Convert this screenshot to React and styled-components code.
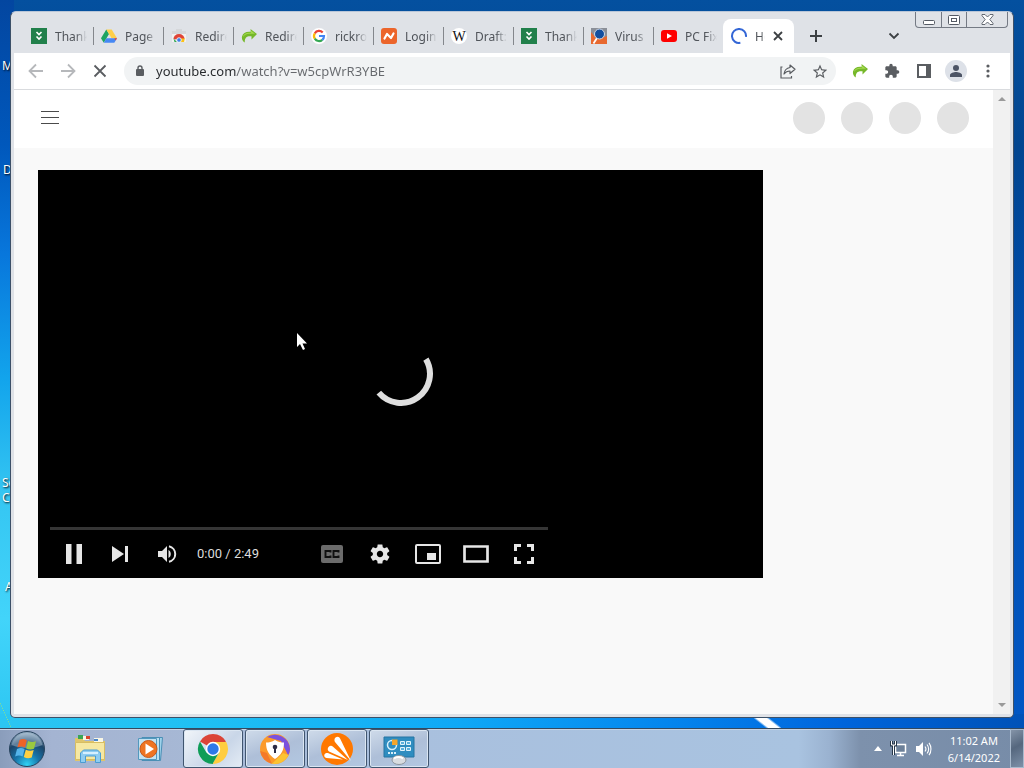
import {styled, createGlobalStyle} from 'styled-components'

const GlobalStyle = createGlobalStyle`
  * {
    box-sizing: border-box;
  }
  body {
    margin: 0;
    font-family: "Noto Sans", "Open Sans", sans-serif;
  }
  button {
    border: 0;
    padding: 0;
    margin: 0;
    background: none;
    font-family: inherit;
    color: inherit;
  }
  svg {
    display: block;
    flex: none;
  }
`

const Desktop = styled.div`
  display: flex;
  flex-direction: column;
  min-height: 100vh;
  overflow: hidden;
`

const Wallpaper = styled.div`
  position: relative;
  display: flex;
  flex: 1;
  padding: 11px 10px 10px;
  background:
    linear-gradient(66deg, transparent 48%, #8fe08a 50%, transparent 52%) left bottom / 11px 26px no-repeat,
    linear-gradient(38deg, transparent 30%, #ffffff 38%, #ffffff 62%, transparent 70%) 753px 100% / 28px 11px no-repeat,
    linear-gradient(90deg, #2cc6f2 0%, #1fc0f4 20%, #0fa8f6 45%, #0486ee 65%, #0065dc 82%, #0052b8 100%) left bottom / 100% 14px no-repeat,
    linear-gradient(180deg, #0346a0 0%, #0058bc 20%, #0877dc 35%, #12a4ec 52%, #35c6f2 68%, #42d4fa 85%, #2cc6f2 100%) left top / 14px 100% no-repeat,
    linear-gradient(180deg, #04509f 0%, #014590 20%, #004fb0 50%, #0056c4 100%);
`

const DesktopLabel = styled.span`
  position: absolute;
  left: ${props => props.$left}px;
  top: ${props => props.$top}px;
  font-size: 12px;
  line-height: 15px;
  color: #ffffff;
  white-space: pre;
  text-shadow: 1px 1px 2px #000000;
`

const Window = styled.main`
  position: relative;
  display: flex;
  flex-direction: column;
  flex: 1;
  min-width: 0;
  padding: 0 3px 3px;
  border: 1px solid #3c5068;
  border-top-color: #b9c6d8;
  border-radius: 6px 6px 5px 5px;
  background: #dfe2e7;
  overflow: hidden;
`

const TabStrip = styled.div`
  display: flex;
  height: 41px;
  padding-left: 9px;
`

const Tab = styled.button`
  display: flex;
  align-items: center;
  gap: 8px;
  width: 70px;
  height: 18px;
  margin-top: 15px;
  padding: 0 6px 0 7px;
  border-left: 1px solid ${props => (props.$first ? 'transparent' : '#84878c')};
  font-size: 12px;
  color: #50545a;
`

const TabTitle = styled.span`
  flex: 1;
  overflow: hidden;
  text-align: left;
  white-space: nowrap;
  mask-image: linear-gradient(90deg, #000000 65%, transparent 100%);
`

const ActiveTab = styled.div`
  display: flex;
  align-items: center;
  gap: 8px;
  width: 71px;
  height: 34px;
  margin-top: 7px;
  padding: 0 11px 0 8px;
  border-radius: 8px 8px 0 0;
  background: #ffffff;
  font-size: 12px;
  color: #50545a;
`

const StripButton = styled.button`
  display: flex;
  align-items: center;
  justify-content: center;
  width: 28px;
  height: 28px;
  margin-top: 10px;
  margin-left: ${props => props.$gap}px;
`

const CloseTab = styled.button`
  width: 10px;
  height: 10px;
`

const Caption = styled.div`
  display: flex;
  height: 16px;
  margin-left: auto;
  margin-right: 2px;
  border: 1px solid #747a84;
  border-top: 0;
  border-radius: 0 0 4px 4px;
`

const CaptionButton = styled.button`
  display: flex;
  align-items: center;
  justify-content: center;
  width: ${props => (props.$wide ? 41 : 25)}px;
  & + & {
    border-left: 1px solid #747a84;
  }
`

const Toolbar = styled.div`
  display: flex;
  align-items: center;
  height: 37px;
  padding: 0 6px;
  border-bottom: 1px solid #d9dbde;
  background: #ffffff;
`

const ToolButton = styled.button`
  display: flex;
  align-items: center;
  justify-content: center;
  flex: none;
  width: 32px;
  height: 28px;
  color: ${props => (props.$faded ? '#b6b8bb' : '#5a5d61')};
`

const Omnibox = styled.form`
  display: flex;
  align-items: center;
  flex: 1;
  min-width: 0;
  height: 28px;
  margin: 0 8px;
  border-radius: 14px;
  background: #f1f3f4;
`

const Address = styled.input`
  flex: 1;
  min-width: 0;
  height: 28px;
  padding: 0;
  border: 0;
  outline: 0;
  font-family: "Noto Sans", "Open Sans", sans-serif;
  font-size: 13px;
  color: transparent;
  background: linear-gradient(90deg, #26292c 80px, #66696d 80px);
  background-clip: text;
`

const Avatar = styled.span`
  display: flex;
  align-items: center;
  justify-content: center;
  width: 22px;
  height: 22px;
  border-radius: 50%;
  background: #dde1e8;
`

const Viewport = styled.div`
  display: flex;
  flex: 1;
  background: #f9f9f9;
`

const Page = styled.div`
  flex: 1;
  min-width: 0;
`

const Scrollbar = styled.div`
  display: flex;
  flex-direction: column;
  justify-content: space-between;
  align-items: center;
  width: 17px;
  padding: 7px 0;
  background: #f1f1f1;
`

const Masthead = styled.header`
  display: flex;
  align-items: center;
  justify-content: space-between;
  height: 58px;
  padding: 0 24px 2px 26px;
  background: #ffffff;
`

const Placeholders = styled.div`
  display: flex;
  gap: 16px;
`

const Circle = styled.span`
  width: 32px;
  height: 32px;
  border-radius: 50%;
  background: #e3e3e3;
`

const WatchLayout = styled.div`
  display: grid;
  grid-template-columns: minmax(0, 1fr) 182px;
  gap: 24px;
  padding: 22px 24px;
`

const Player = styled.section`
  position: relative;
  display: flex;
  flex-direction: column;
  justify-content: flex-end;
  aspect-ratio: 16 / 9;
  padding: 0 12px;
  background: #000000;
`

const Spinner = styled.div`
  position: absolute;
  inset: 0;
  display: flex;
  align-items: center;
  justify-content: center;
`

const Controls = styled.div`
  position: relative;
  width: 71%;
  border-top: 3px solid #353535;
`

const ControlRow = styled.div`
  display: flex;
  align-items: center;
  height: 48px;
  color: #e6e6e6;
`

const ControlButton = styled.button`
  display: flex;
  align-items: center;
  justify-content: center;
  width: ${props => (props.$right ? 48 : 47)}px;
  height: 48px;
`

const Time = styled.span`
  flex: 1;
  padding-left: 6px;
  font-family: Roboto, "Liberation Sans", sans-serif;
  font-size: 13px;
  color: #dddddd;
  white-space: nowrap;
`

const Pointer = styled.svg`
  position: absolute;
  left: 285px;
  top: 320px;
`

const Taskbar = styled.footer`
  display: flex;
  align-items: center;
  height: 40px;
  border-top: 1px solid #34495f;
  box-shadow: inset 0 1px 0 #c6d4e6;
  background: linear-gradient(90deg, #8a9dbb 0%, #a4b4d2 5%, #a6b7d4 16%, #a9c0de 40%, #a9c3e0 78%, #9ab2d0 81%, #7d91ac 84%, #778ca8 100%);
`

const StartButton = styled.button`
  display: flex;
  justify-content: center;
  width: 54px;
`

const Pinned = styled.button`
  display: flex;
  justify-content: center;
  width: 61px;
  margin-left: ${props => (props.$first ? 5 : 0)}px;
`

const Running = styled.div`
  display: flex;
  align-self: stretch;
  gap: 2px;
  padding-left: 2px;
`

const TaskButton = styled.button`
  display: flex;
  align-items: center;
  justify-content: center;
  width: 60px;
  border: 1px solid #40556f;
  border-radius: 3px;
  box-shadow: inset 0 0 0 1px #dbe6f2;
  background: ${props =>
    props.$active
      ? 'linear-gradient(135deg, #f2f6fa, #c9d6e8 60%, #e4ecf5)'
      : 'linear-gradient(160deg, #cfdbea, #aebfd8 50%, #b3c8e2)'};
`

const Tray = styled.div`
  display: flex;
  align-items: center;
  align-self: stretch;
  gap: 8px;
  margin-left: auto;
`

const Clock = styled.div`
  margin: 0 2px 0 8px;
  font-size: 11px;
  line-height: 17px;
  text-align: center;
  color: #ffffff;
`

const ShowDesktop = styled.button`
  align-self: stretch;
  width: 14px;
  border: 1px solid #a9bacd;
  background: linear-gradient(150deg, #8494a8, #55677e 45%, #7d90a8);
`

function DownloadMark() {
  return (
    <svg width="16" height="16" viewBox="0 0 16 16">
      <path fill="#21804b" d="M0 0h16v16H0z" />
      <path d="M5.500 4l2.500 2.500 2.500-2.500M5.500 8.500l2.500 2.500 2.500-2.500" fill="none" stroke="#fff" strokeWidth="1.600" />
    </svg>
  )
}

function DriveMark() {
  return (
    <svg width="16" height="16" viewBox="0 0 16 16">
      <path fill="#1da462" d="M5.300 1.500L8 6 2.800 14.700 0 10.300z" />
      <path fill="#ffcf48" d="M5.300 1.500h5.400L16 10.300h-5.400z" />
      <path fill="#4688f4" d="M5.400 10.300H16l-2.700 4.400H2.800z" />
      <path fill="#ea4335" d="M13.300 10.300H16l-1.400 2.300z" />
    </svg>
  )
}

function StoreMark() {
  return (
    <svg width="16" height="16" viewBox="0 0 16 16">
      <path fill="#f2f2f2" d="M1 3h14v11H1z" />
      <path fill="#d5d7da" d="M5 1h6v2H5zM1 3h14v3H1z" />
      <path fill="#e04437" d="M2.500 11a5.500 5 0 0 1 11 0l-5.500 1z" />
      <path fill="#35a853" d="M2.500 10.500L6 14H3.500z" />
      <path fill="#fbc116" d="M13.800 10.500H9L8 14h5z" />
      <circle cx="8" cy="12" r="2.300" fill="#3f7fe8" stroke="#fff" strokeWidth=".8" />
    </svg>
  )
}

function GreenArrow() {
  return (
    <svg width="16" height="16" viewBox="0 0 16 16">
      <path fill="#76b82a" d="M9.500 1L16 6l-5.500 5.500V8.300C6 7.600 3.500 9.500 3.800 14.500 1.800 13.500.5 11 1 8.600 1.800 5 5 3.300 9.800 3.800z" />
      <path fill="#a3d84e" d="M9.900 2.500L14 5.700H9C5.500 5.500 3 7 1.800 9.300 2.200 6 5 4.300 9.900 4.700z" />
    </svg>
  )
}

function GoogleMark() {
  return (
    <svg width="16" height="16" viewBox="0 0 16 16">
      <circle cx="8" cy="8" r="8" fill="#fff" />
      <g fill="none" strokeWidth="2.200">
        <path stroke="#ea4335" d="M3.800 5.300A5 5 0 0 1 11.700 4.500" />
        <path stroke="#fbbc05" d="M3.800 10.700A5 5 0 0 1 3.800 5.300" />
        <path stroke="#34a853" d="M11.300 11.800A5 5 0 0 1 3.800 10.700" />
        <path stroke="#4285f4" d="M8 8h5A5 5 0 0 1 11.300 11.800" />
      </g>
    </svg>
  )
}

function NamecheapMark() {
  return (
    <svg width="16" height="16" viewBox="0 0 16 16">
      <rect width="16" height="16" rx="3" fill="#ec652b" />
      <path d="M3.500 10.500l2.500-4.500 4 4 2.500-4.500" fill="none" stroke="#fff" strokeWidth="2.200" strokeLinecap="round" strokeLinejoin="round" />
    </svg>
  )
}

function WikiMark() {
  return (
    <svg width="16" height="16" viewBox="0 0 16 16">
      <circle cx="8" cy="8" r="8" fill="#fff" />
      <text x="8" y="13" textAnchor="middle" fontFamily="Liberation Serif" fontSize="14" fill="#111">W</text>
    </svg>
  )
}

function VirusMark() {
  return (
    <svg width="16" height="16" viewBox="0 0 16 16">
      <path fill="#8b8f98" d="M0 0h16v16H0z" />
      <path fill="#e8692f" d="M0 4l5 6h6l5-2v8H0z" />
      <path d="M6 10l-3.500 5.500" stroke="#fff" strokeWidth="1.800" />
      <circle cx="8.500" cy="6" r="5" fill="#134fa0" stroke="#d4dae4" />
    </svg>
  )
}

function YoutubeMark() {
  return (
    <svg width="16" height="16" viewBox="0 0 16 16">
      <rect y="2" width="16" height="12" rx="3" fill="#f00" />
      <path fill="#fff" d="M6 5.300v5.400L11 8z" />
    </svg>
  )
}

function ChromeMark() {
  return (
    <svg width="32" height="32" viewBox="0 0 32 32">
      <path fill="#db4437" d="M16 16L3 8.500a15 15 0 0 1 26 0z" />
      <path fill="#0f9d58" d="M16 16l0 15A15 15 0 0 1 3 8.500l6.500 11.200z" />
      <path fill="#ffcd40" d="M16 9h13.300A15 15 0 0 1 15.500 31L22 19.500z" />
      <path fill="#0f9d58" d="M9.800 19.500L15.500 31l6.500-11.500z" />
      <circle cx="16" cy="16" r="7.200" fill="#fff" />
      <circle cx="16" cy="16" r="5.700" fill="#2f79e8" />
    </svg>
  )
}

function SecureBrowserMark() {
  return (
    <svg width="32" height="32" viewBox="0 0 32 32">
      <circle cx="16" cy="16" r="15" fill="#fb9a2b" />
      <path fill="#7b51dd" d="M8 4a15 15 0 0 1 23 12c0 2-1 5-2 6L22 8z" />
      <path fill="#fbc332" d="M29.500 22A15 15 0 0 1 13 30.700L24 20z" />
      <path fill="#f47a2a" d="M13 30.700A15 15 0 0 1 1.200 18L8 20z" />
      <path fill="#fff" d="M16 7c3 2 6 2.500 9 2.500 0 8-3 12.500-9 16.500-6-4-9-8.500-9-16.500 3 0 6-.5 9-2.500z" />
      <circle cx="16" cy="14" r="2.300" fill="#2c2c46" />
      <path fill="#2c2c46" d="M15 14h2v6h-2z" />
    </svg>
  )
}

function AvastMark() {
  return (
    <svg width="34" height="32" viewBox="0 0 34 32">
      <circle cx="17" cy="16" r="16" fill="#ff7800" />
      <g fill="#fff">
        <path d="M15.500 4.500c2-1.500 4-.5 4.700 1.200L31 28 15 9c-.8-1.300-.8-3.500.5-4.500z" />
        <path d="M8.500 14c1.500-1.700 3.300-1.500 4.500-.3L28 27 9 18.500c-1.500-1-1.700-3-.5-4.500z" />
        <path d="M4.500 21.500c1-1.500 2.600-1.700 4-1.200L23 26.500 6.500 25C4.500 24.500 3.800 23 4.500 21.500z" />
      </g>
    </svg>
  )
}

function ControlPanelMark() {
  return (
    <svg width="32" height="32" viewBox="0 0 32 32">
      <path fill="#2f8dc0" stroke="#2775a2" d="M1 4h30v20H1z" />
      <circle cx="9" cy="12" r="4.500" fill="none" stroke="#d5effa" strokeWidth="1.500" />
      <path fill="#f5a52b" d="M9 12V6.500h5.500V12z" />
      <g fill="#5db1dc" stroke="#e1f4fc">
        <path d="M17.500 8.500h4v3h-4zM23.500 8.500h4v3h-4zM17.500 14.500h4v3h-4zM23.500 14.500h4v3h-4z" />
      </g>
      <path d="M5 20h2M8 20h2M11 20h2" stroke="#d5effa" strokeWidth="2" />
      <ellipse cx="16" cy="27" rx="7" ry="4.500" fill="#d8dce0" stroke="#8c959d" />
      <path d="M11 25.500c2-2 7-2 9 0" fill="none" stroke="#fff" strokeWidth="2" />
    </svg>
  )
}

function StartOrb() {
  return (
    <svg width="38" height="38" viewBox="0 0 38 38">
      <defs>
        <radialGradient id="orb" cx="50%" cy="95%" r="90%">
          <stop offset="0" stopColor="#2fd3f5" />
          <stop offset=".4" stopColor="#1773a8" />
          <stop offset=".75" stopColor="#1c4468" />
          <stop offset="1" stopColor="#8fa9bf" />
        </radialGradient>
      </defs>
      <circle cx="19" cy="19" r="17.500" fill="url(#orb)" stroke="#27435d" />
      <path fill="#c6d8e6" opacity=".4" d="M3.500 15a16 16 0 0 1 31 0c-9 4-22 4-31 0z" />
      <path fill="#ee6327" d="M11.500 10c2.500-1.500 5-1.300 7.300.2L17 17.500c-2.400-1.300-5-1.400-7.600 0z" />
      <path fill="#9ac93f" d="M20 11c2.600 1.300 5.200 1.400 8 .3l-2 7.500c-2.600 1-5.200 1-7.800-.4z" />
      <path fill="#55b4ea" d="M9 19c2.700-1.400 5.200-1.300 7.600 0l-2 7.500c-2.300-1.300-4.700-1.400-7.500 0z" />
      <path fill="#fdd041" d="M17.800 19.800c2.700 1.200 5.200 1.400 7.900.3l-2 7.500c-2.700 1-5.300.9-7.900-.5z" />
    </svg>
  )
}

function FolderMark() {
  return (
    <svg width="32" height="32" viewBox="0 0 32 32">
      <path fill="#dfc56c" d="M1 5h8l2 3h20v20H1z" />
      <path fill="#3aa655" d="M4 2h5v4H4z" />
      <path fill="#f9f7e5" d="M9 3h6v4H9zM20 5h9v4h-9z" />
      <path fill="#d9452c" d="M12 3h4v3h-4z" />
      <path fill="#4a87c8" d="M20 6h4v2h-4z" />
      <path fill="#f6e8a2" stroke="#d7bd62" d="M1.500 9.500h29v17h-29z" />
      <path fill="#8fcdf1" stroke="#4b9cd2" d="M6.500 29.500V20l3-3h14l3 3v9.500h-5V23h-10v6.500z" />
      <path d="M9 20h15" stroke="#d6f0ff" strokeWidth="2" />
    </svg>
  )
}

function MediaMark() {
  return (
    <svg width="28" height="28" viewBox="0 0 28 28">
      <path fill="#9fd2ea" stroke="#4a8fb5" d="M8 2.500h17.500l-2 23H8z" />
      <path fill="#b8e0f2" stroke="#4a8fb5" d="M5 2.500h17.500v23H5z" />
      <path fill="#c3e2f1" stroke="#5298bd" d="M1.500 3.500h18v21h-18z" />
      <circle cx="11.500" cy="14" r="8.500" fill="#ee7422" stroke="#c8591a" />
      <path fill="#fff" d="M8.500 8.500v11l8.500-5.500z" />
    </svg>
  )
}

const tabs = [
  {nome: 'Thank', Icon: DownloadMark},
  {nome: 'Page', Icon: DriveMark},
  {nome: 'Redire', Icon: StoreMark},
  {nome: 'Redire', Icon: GreenArrow},
  {nome: 'rickro', Icon: GoogleMark},
  {nome: 'Login', Icon: NamecheapMark},
  {nome: 'Draft:', Icon: WikiMark},
  {nome: 'Thank', Icon: DownloadMark},
  {nome: 'Virus', Icon: VirusMark},
  {nome: 'PC Fix', Icon: YoutubeMark}
]

const labels = [
  {text: 'M', left: 2, top: 58},
  {text: 'D', left: 3, top: 162},
  {text: 'Se\nC', left: 2, top: 475},
  {text: 'A', left: 5, top: 579}
]

const running = [
  {nome: 'Google Chrome', Icon: ChromeMark, active: true},
  {nome: 'Secure Browser', Icon: SecureBrowserMark},
  {nome: 'Avast', Icon: AvastMark},
  {nome: 'Control Panel', Icon: ControlPanelMark}
]

function BrowserTabs() {
  return (
    <TabStrip>
      {tabs.map(({nome, Icon}, index) => (
        <Tab key={index} $first={index === 0}>
          <Icon />
          <TabTitle>{nome}</TabTitle>
        </Tab>
      ))}
      <ActiveTab>
        <svg width="16" height="16" viewBox="0 0 16 16">
          <path d="M10.300 14.600A7 7 0 1 1 15 8" transform="rotate(8 8 8)" fill="none" stroke="#3467d6" strokeWidth="2" />
        </svg>
        <TabTitle>Ho</TabTitle>
        <CloseTab aria-label="Close tab">
          <svg width="10" height="10" viewBox="0 0 10 10">
            <path d="M1 1l8 8M9 1l-8 8" stroke="#3c4043" strokeWidth="1.800" />
          </svg>
        </CloseTab>
      </ActiveTab>
      <StripButton $gap={8} aria-label="New tab">
        <svg width="12" height="12" viewBox="0 0 12 12">
          <path d="M6 0v12M0 6h12" stroke="#3c4043" strokeWidth="2" />
        </svg>
      </StripButton>
      <StripButton $gap={50} aria-label="Search tabs">
        <svg width="12" height="8" viewBox="0 0 12 8">
          <path d="M1.500 1.500L6 6l4.500-4.500" fill="none" stroke="#3c4043" strokeWidth="1.800" />
        </svg>
      </StripButton>
      <Caption>
        <CaptionButton aria-label="Minimize">
          <svg width="12" height="12" viewBox="0 0 12 12">
            <rect x=".5" y="6.500" width="11" height="4" rx="1" fill="#fff" stroke="#545a64" />
          </svg>
        </CaptionButton>
        <CaptionButton aria-label="Restore">
          <svg width="12" height="10" viewBox="0 0 12 10">
            <rect x=".5" y=".5" width="11" height="9" rx="1" fill="#fff" stroke="#545a64" />
            <rect x="3.500" y="3.500" width="5" height="3" fill="#fff" stroke="#545a64" />
          </svg>
        </CaptionButton>
        <CaptionButton $wide aria-label="Close">
          <svg width="13" height="11" viewBox="0 0 13 11">
            <path d="M1 .5h3L6.500 3 9 .5h3v1.200L8.800 5.500l3.200 3.800v1.200H9L6.500 8 4 10.500H1V9.300l3.200-3.800L1 1.700z" fill="#fff" stroke="#545a64" strokeWidth=".9" />
          </svg>
        </CaptionButton>
      </Caption>
    </TabStrip>
  )
}

function BrowserToolbar() {
  return (
    <Toolbar>
      <ToolButton $faded aria-label="Back">
        <svg width="16" height="16" viewBox="0 0 16 16">
          <path d="M15 8H2M8 1.500L1.500 8 8 14.500" fill="none" stroke="currentColor" strokeWidth="1.800" />
        </svg>
      </ToolButton>
      <ToolButton $faded aria-label="Forward">
        <svg width="16" height="16" viewBox="0 0 16 16">
          <path d="M1 8h13M8 1.500L14.500 8 8 14.500" fill="none" stroke="currentColor" strokeWidth="1.800" />
        </svg>
      </ToolButton>
      <ToolButton aria-label="Stop loading">
        <svg width="14" height="14" viewBox="0 0 14 14">
          <path d="M1.500 1.500l11 11M12.500 1.500l-11 11" stroke="currentColor" strokeWidth="1.800" />
        </svg>
      </ToolButton>
      <Omnibox onSubmit={event => event.preventDefault()}>
        <ToolButton type="button" aria-label="Site information">
          <svg width="10" height="14" viewBox="0 0 10 14">
            <rect x="1" y="5" width="8" height="7" rx="1" fill="currentColor" />
            <path d="M3 5.500V4a2 2 0 0 1 4 0v1.500" fill="none" stroke="currentColor" strokeWidth="1.400" />
          </svg>
        </ToolButton>
        <Address aria-label="Address" defaultValue="youtube.com/watch?v=w5cpWrR3YBE" />
        <ToolButton type="button" aria-label="Share">
          <svg width="16" height="16" viewBox="0 0 16 16">
            <path d="M2.500 4H1v11h10.500v-2" fill="none" stroke="currentColor" strokeWidth="1.200" />
            <path d="M10 2l5 4.300-5 4.200V8C7.500 8 5.500 9 4 11c.5-3.500 2.500-6 6-6.500z" fill="none" stroke="currentColor" strokeWidth="1.200" strokeLinejoin="round" />
          </svg>
        </ToolButton>
        <ToolButton type="button" aria-label="Bookmark this tab">
          <svg width="16" height="16" viewBox="1 0 22 22">
            <path fill="currentColor" d="M22 9.240l-7.190-.62L12 2 9.190 8.630 2 9.240l5.460 4.730L5.820 21 12 17.270 18.180 21l-1.630-7.030L22 9.240zM12 15.400l-3.760 2.270 1-4.280-3.320-2.880 4.380-.38L12 6.100l1.710 4.040 4.380.38-3.320 2.880 1 4.280L12 15.400z" />
          </svg>
        </ToolButton>
      </Omnibox>
      <ToolButton aria-label="Redirect extension">
        <GreenArrow />
      </ToolButton>
      <ToolButton aria-label="Extensions">
        <svg width="16" height="16" viewBox="0 0 24 24">
          <path fill="currentColor" d="M20.500 11H19V7c0-1.100-.9-2-2-2h-4V3.500a2.500 2.500 0 0 0-5 0V5H4c-1.100 0-2 .9-2 2v3.800h1.500c1.500 0 2.700 1.200 2.700 2.700S5 16.200 3.500 16.200H2V20c0 1.100.9 2 2 2h3.800v-1.500c0-1.500 1.200-2.700 2.700-2.700s2.700 1.200 2.700 2.700V22H17c1.100 0 2-.9 2-2v-4h1.500a2.500 2.500 0 0 0 0-5z" />
        </svg>
      </ToolButton>
      <ToolButton aria-label="Side panel">
        <svg width="14" height="14" viewBox="0 0 14 14">
          <path d="M1 1h12v12H1z" fill="none" stroke="currentColor" strokeWidth="2" />
          <path fill="currentColor" d="M9 1h4v12H9z" />
        </svg>
      </ToolButton>
      <ToolButton aria-label="Profile">
        <Avatar>
          <svg width="12" height="12" viewBox="0 0 12 12">
            <circle cx="6" cy="3" r="3" fill="#4c5465" />
            <path fill="#4c5465" d="M0 12v-2c0-2 4-3 6-3s6 1 6 3v2z" />
          </svg>
        </Avatar>
      </ToolButton>
      <ToolButton aria-label="Menu">
        <svg width="4" height="14" viewBox="0 0 4 14">
          <circle cx="2" cy="2" r="1.600" fill="currentColor" />
          <circle cx="2" cy="7" r="1.600" fill="currentColor" />
          <circle cx="2" cy="12" r="1.600" fill="currentColor" />
        </svg>
      </ToolButton>
    </Toolbar>
  )
}

function VideoPlayer() {
  return (
    <Player aria-label="Video player">
      <Spinner>
        <svg width="64" height="64" viewBox="0 0 64 64">
          <path d="M56.900 17.100A29 29 0 0 1 9.800 50.600" fill="none" stroke="#dedede" strokeWidth="6" />
        </svg>
      </Spinner>
      <Controls>
        <ControlRow>
          <ControlButton aria-label="Pause">
            <svg width="16" height="20" viewBox="0 0 16 20">
              <path fill="currentColor" d="M0 0h5.500v20H0zM10.500 0H16v20h-5.500z" />
            </svg>
          </ControlButton>
          <ControlButton aria-label="Next">
            <svg width="18" height="16" viewBox="0 0 18 16">
              <path fill="currentColor" d="M0 0l12 8-12 8zM13 0h3v16h-3z" />
            </svg>
          </ControlButton>
          <ControlButton aria-label="Mute">
            <svg width="20" height="18" viewBox="0 0 20 18">
              <path fill="currentColor" d="M0 6v6h4l5 5V1L4 6zM10.500 5v8c1.400-.7 2.300-2.200 2.300-4s-.9-3.300-2.300-4z" />
              <path d="M11 1.200a8 8 0 0 1 0 15.600" fill="none" stroke="currentColor" strokeWidth="2" />
            </svg>
          </ControlButton>
          <Time>0:00 / 2:49</Time>
          <ControlButton $right aria-label="Subtitles">
            <svg width="22" height="18" viewBox="0 0 22 18">
              <rect width="22" height="18" rx="2" fill="#6b6b6b" />
              <path d="M9.500 7.500V6h-5v6h5v-1.500M17.500 7.500V6h-5v6h5v-1.500" fill="none" stroke="#101010" strokeWidth="1.900" />
            </svg>
          </ControlButton>
          <ControlButton $right aria-label="Settings">
            <svg width="24" height="24" viewBox="0 0 24 24">
              <path fill="currentColor" d="M19.140 12.940c.04-.3.060-.61.060-.94 0-.32-.02-.64-.07-.94l2.030-1.580c.18-.14.230-.41.120-.61l-1.920-3.320c-.12-.22-.37-.29-.59-.22l-2.390.96c-.5-.38-1.030-.7-1.620-.94l-.36-2.540c-.04-.24-.24-.41-.48-.41h-3.840c-.24 0-.43.17-.47.41l-.36 2.540c-.59.240-1.130.57-1.620.94l-2.390-.96c-.22-.08-.47 0-.59.220L2.740 8.870c-.12.210-.08.470.12.610l2.030 1.580c-.05.300-.09.630-.09.940s.02.640.070.940l-2.030 1.580c-.18.140-.23.410-.12.610l1.920 3.320c.12.220.370.290.590.220l2.390-.96c.5.380 1.030.700 1.620.940l.36 2.540c.05.240.240.410.480.410h3.840c.24 0 .44-.17.470-.41l.36-2.540c.59-.24 1.130-.56 1.620-.94l2.390.96c.22.080.470 0 .59-.22l1.920-3.320c.12-.22.070-.47-.12-.61l-2.010-1.580zM12 15.200c-1.770 0-3.200-1.430-3.200-3.200s1.430-3.200 3.200-3.200 3.200 1.430 3.200 3.200-1.430 3.200-3.200 3.200z" />
            </svg>
          </ControlButton>
          <ControlButton $right aria-label="Miniplayer">
            <svg width="26" height="20" viewBox="0 0 26 20">
              <rect x="1" y="1" width="24" height="18" rx="1" fill="none" stroke="currentColor" strokeWidth="2" />
              <path fill="currentColor" d="M12 9h9v7h-9z" />
            </svg>
          </ControlButton>
          <ControlButton $right aria-label="Theater mode">
            <svg width="26" height="18" viewBox="0 0 26 18">
              <path d="M1.500 1.500h23v15h-23z" fill="none" stroke="currentColor" strokeWidth="2.700" />
            </svg>
          </ControlButton>
          <ControlButton $right aria-label="Full screen">
            <svg width="20" height="20" viewBox="0 0 20 20">
              <path d="M1.500 7V1.500H7M13 1.500h5.500V7M18.500 13v5.500H13M7 18.500H1.500V13" fill="none" stroke="currentColor" strokeWidth="3" />
            </svg>
          </ControlButton>
        </ControlRow>
      </Controls>
    </Player>
  )
}

function SystemTaskbar() {
  return (
    <Taskbar>
      <StartButton aria-label="Start">
        <StartOrb />
      </StartButton>
      <Pinned $first aria-label="Windows Explorer">
        <FolderMark />
      </Pinned>
      <Pinned aria-label="Media Player">
        <MediaMark />
      </Pinned>
      <Running>
        {running.map(({nome, Icon, active}) => (
          <TaskButton key={nome} aria-label={nome} $active={active}>
            <Icon />
          </TaskButton>
        ))}
      </Running>
      <Tray>
        <svg width="8" height="5" viewBox="0 0 8 5">
          <path fill="#fff" d="M4 0l4 5H0z" />
        </svg>
        <svg width="18" height="16" viewBox="0 0 18 16">
          <path d="M5.500 3.500h10v8h-10z" fill="#6c8099" stroke="#fff" strokeWidth="1.500" />
          <path d="M10.500 11v3M7 14.500h7" stroke="#fff" strokeWidth="1.500" />
          <path d="M1.500 0v4h4V0M3.500 4v10" fill="none" stroke="#26374a" strokeWidth="3" />
          <path d="M1.500 0v4h4V0M3.500 4v10" fill="none" stroke="#fff" />
        </svg>
        <svg width="16" height="16" viewBox="0 0 16 16">
          <path fill="#fff" d="M0 5h3l4-4v14l-4-4H0z" />
          <path d="M9 5.500c1.200 1.500 1.200 3.500 0 5M11 3.500c2.200 2.500 2.200 6.500 0 9M13 1.800c2.600 3.500 2.600 8.900 0 12.400" fill="none" stroke="#fff" strokeWidth="1.100" />
        </svg>
        <Clock>
          11:02 AM
          <br />
          6/14/2022
        </Clock>
        <ShowDesktop aria-label="Show desktop" />
      </Tray>
    </Taskbar>
  )
}

function App() {
  return (
    <Desktop>
      <GlobalStyle />
      <Wallpaper>
        {labels.map(label => (
          <DesktopLabel key={label.text} $left={label.left} $top={label.top}>
            {label.text}
          </DesktopLabel>
        ))}
        <Window>
          <BrowserTabs />
          <BrowserToolbar />
          <Viewport>
            <Page>
              <Masthead>
                <button aria-label="Guide">
                  <svg width="20" height="14" viewBox="0 0 20 14">
                    <path d="M1 .5h18M1 6.500h18M1 12.500h18" stroke="#4a4a4a" />
                  </svg>
                </button>
                <Placeholders>
                  <Circle />
                  <Circle />
                  <Circle />
                  <Circle />
                </Placeholders>
              </Masthead>
              <WatchLayout>
                <VideoPlayer />
              </WatchLayout>
            </Page>
            <Scrollbar>
              <svg width="8" height="4" viewBox="0 0 8 4">
                <path fill="#9a9a9a" d="M4 0l4 4H0z" />
              </svg>
              <svg width="8" height="4" viewBox="0 0 8 4">
                <path fill="#9a9a9a" d="M0 0h8L4 4z" />
              </svg>
            </Scrollbar>
          </Viewport>
          <Pointer width="12" height="19" viewBox="0 0 12 19">
            <path fill="#fff" d="M1 1v14l3-3 3 6 2-1-2.500-5.500H11z" />
          </Pointer>
        </Window>
      </Wallpaper>
      <SystemTaskbar />
    </Desktop>
  )
}

export default App
